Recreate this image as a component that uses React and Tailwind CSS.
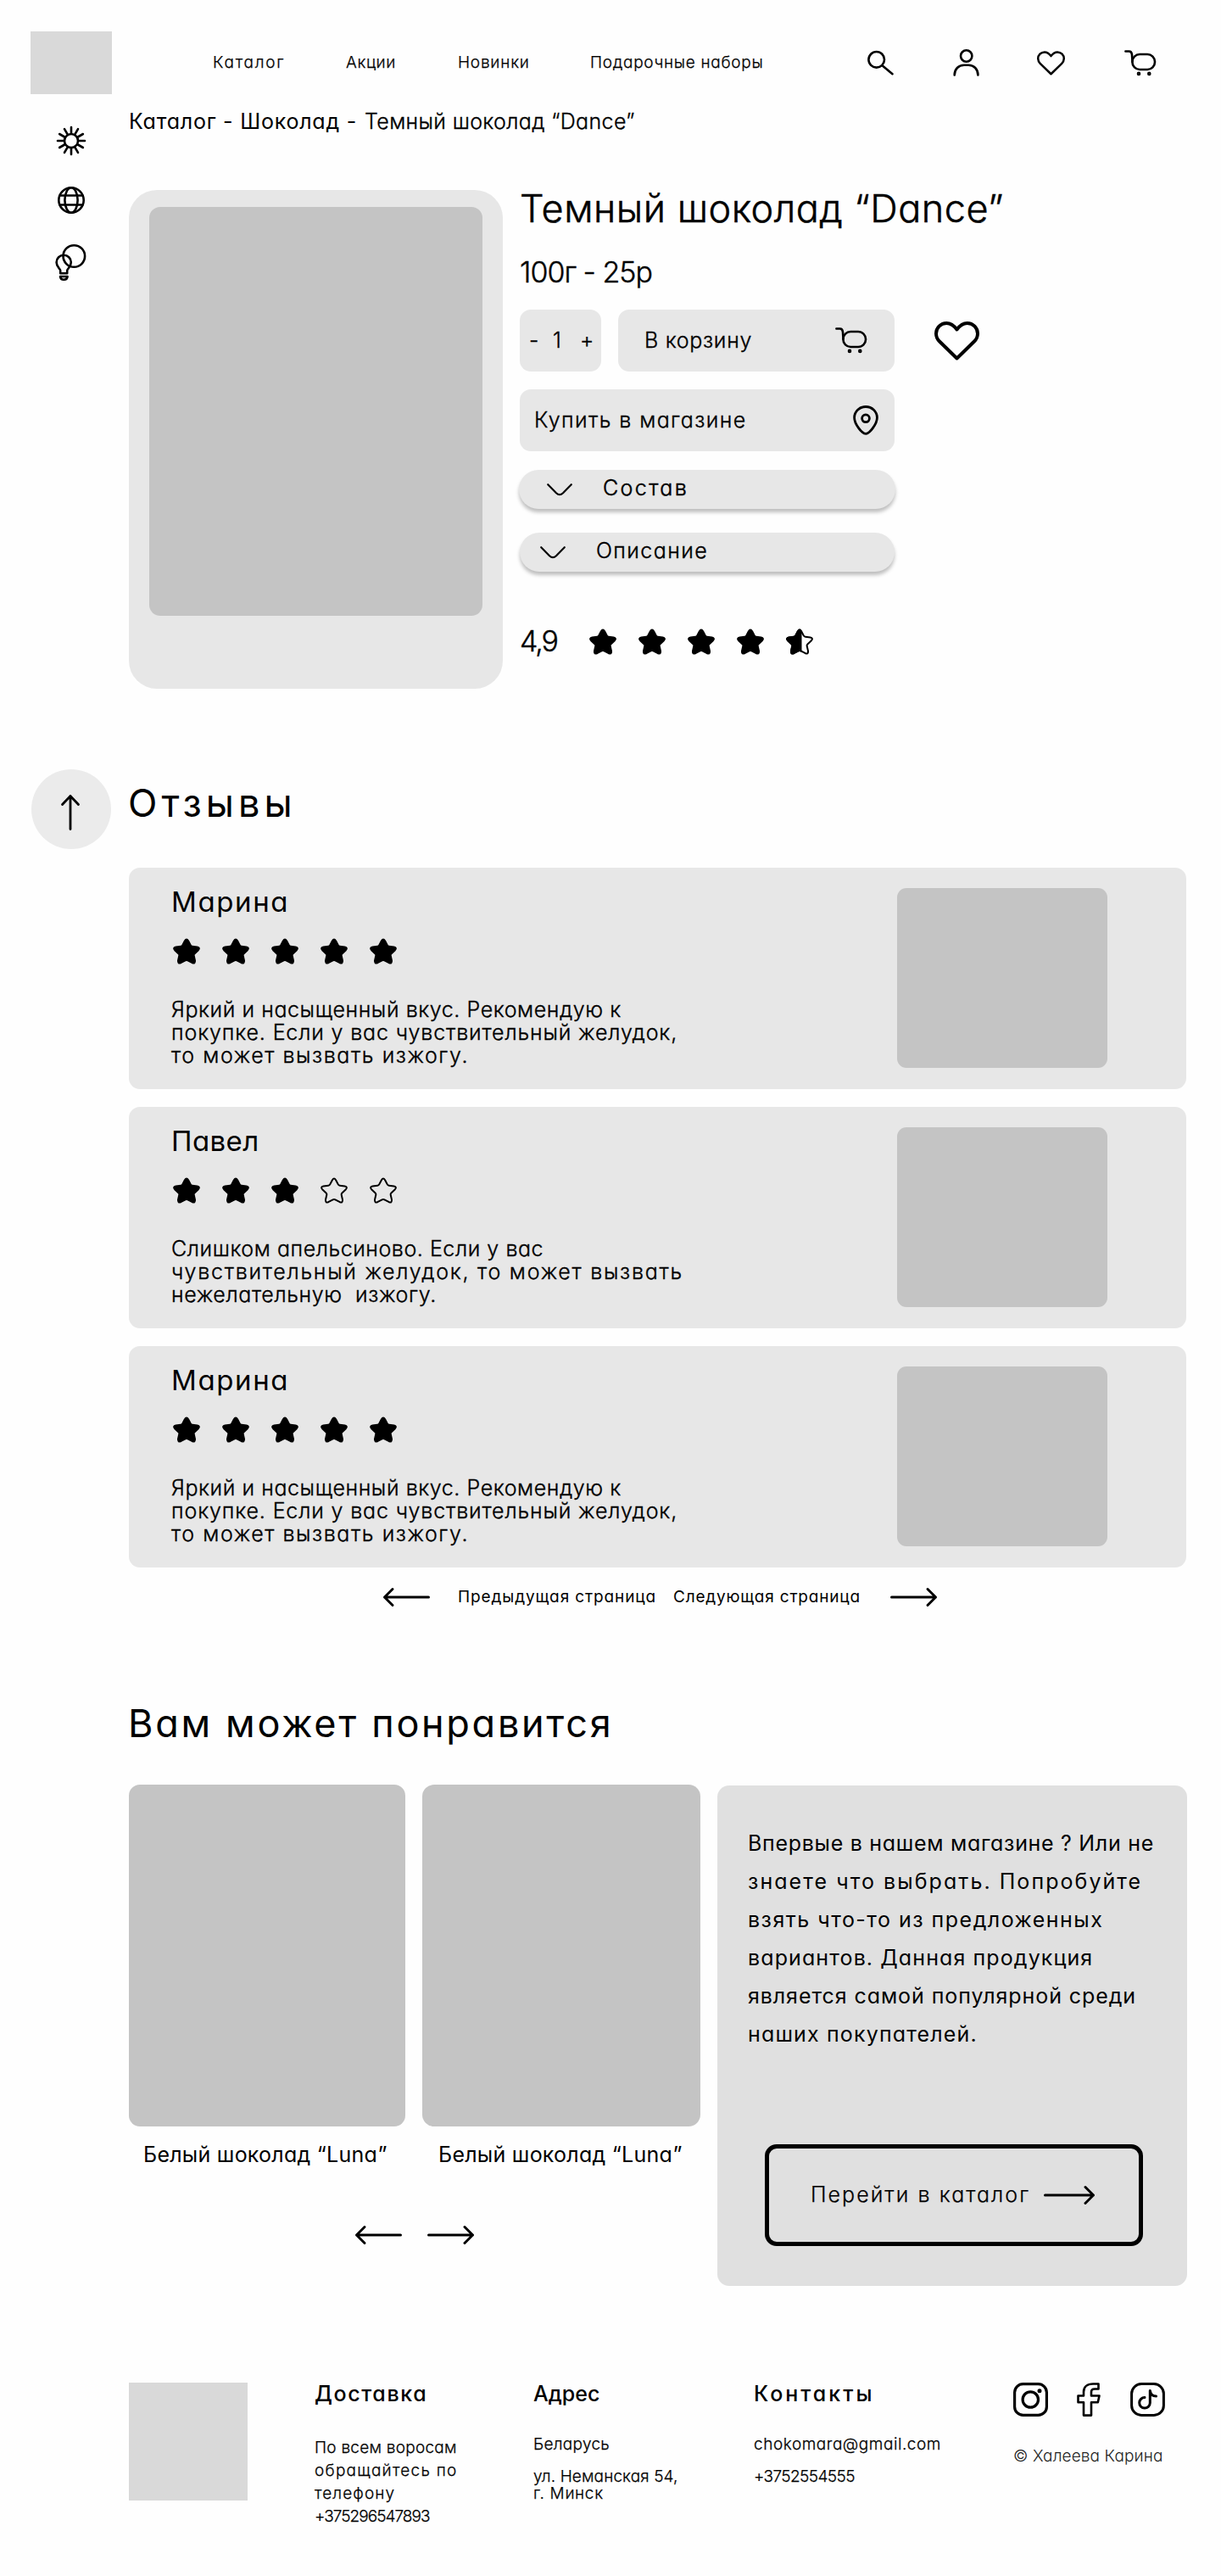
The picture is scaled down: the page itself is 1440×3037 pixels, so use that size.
import React, { useId } from "react";

const STAR =
  "M13.9 3.2Q16 -0.2 18.1 3.2L20.8 8.4Q21.4 9.6 22.8 9.8L28.6 10.6Q32.4 11.4 29.9 14.2L25.4 18.4Q24.4 19.4 24.7 20.7L26 26.4Q26.4 30.6 22.8 29.2L17.4 26.3Q16 25.6 14.6 26.3L9.2 29.2Q5.6 30.6 6 26.4L7.3 20.7Q7.6 19.4 6.6 18.4L2.1 14.2Q-.4 11.4 3.4 10.6L9.2 9.8Q10.6 9.6 11.2 8.4Z";

function Svg({ w, h, sw = 2.6, className = "", children }) {
  return (
    <svg
      width={w}
      height={h}
      viewBox={`0 0 ${w} ${h}`}
      fill="none"
      stroke="#000"
      strokeWidth={sw}
      strokeLinecap="round"
      strokeLinejoin="round"
      className={`shrink-0 overflow-visible ${className}`}
    >
      {children}
    </svg>
  );
}

function Star({ kind = "full" }) {
  const id = useId();
  return (
    <Svg w={32} h={31} sw={2}>
      {kind === "half" && (
        <clipPath id={id}>
          <rect x="-2" y="-2" width="20.5" height="36" />
        </clipPath>
      )}
      <path d={STAR} fill={kind === "full" ? "#000" : "none"} />
      {kind === "half" && <path d={STAR} fill="#000" clipPath={`url(#${id})`} />}
    </Svg>
  );
}

function Stars({ kinds, className = "" }) {
  return (
    <div className={`flex gap-[26px] ${className}`}>
      {kinds.map((k, i) => (
        <Star key={i} kind={k} />
      ))}
    </div>
  );
}

function Heart({ w, h, className }) {
  return (
    <svg width={w} height={h} viewBox="0 0 53 46" fill="none" stroke="#000" strokeWidth="4" strokeLinejoin="round" className={`shrink-0 ${className}`}>
      <path d="M26.5 43.5L6 23.5A13 13 0 0 1 2 14.5A12.3 12.3 0 0 1 14.3 2C19.5 2 23 4.8 26.5 9.5C30 4.8 33.5 2 38.7 2A12.3 12.3 0 0 1 51 14.5A13 13 0 0 1 47 23.5Z" />
    </svg>
  );
}

function Cart({ className }) {
  return (
    <Svg w={38} h={31} className={className}>
      <path d="M1.4 1.5H5.5C8.2 1.5 8.8 3 9 5.5L9.5 13.5" />
      <rect x="9.4" y="5" width="26.6" height="18" rx="8.8" />
      <circle cx="17" cy="27.9" r="1.3" strokeWidth="2" />
      <circle cx="29.3" cy="27.9" r="1.3" strokeWidth="2" />
    </Svg>
  );
}

function Arrow({ left, w = 55, className = "" }) {
  const end = w - 1.5;
  return (
    <Svg w={w} h={22} sw={3} className={className}>
      <g transform={left ? `matrix(-1 0 0 1 ${w} 0)` : undefined}>
        <path d={`M1.5 11H${end}M${end - 9.5} 1.5L${end} 11L${end - 9.5} 20.5`} />
      </g>
    </Svg>
  );
}

function Chevron({ className }) {
  return (
    <Svg w={30} h={15} sw={2.2} className={className}>
      <path d="M1.2 1.2L11 11.2Q15 15 19 11.2L28.8 1.2" />
    </Svg>
  );
}

const F5 = ["full", "full", "full", "full", "full"];

const marina = {
  name: <span className="tracking-[1.6px]">Марина</span>,
  stars: F5,
  lines: (
    <>
      <p className="tracking-[0.57px]">Яркий и насыщенный вкус. Рекомендую к</p>
      <p className="tracking-[0.86px]">покупке. Если у вас чувствительный желудок,</p>
      <p className="tracking-[1.56px]">то может вызвать изжогу.</p>
    </>
  ),
};

const pavel = {
  name: <span className="tracking-[0.4px]">Павел</span>,
  stars: ["full", "full", "full", "empty", "empty"],
  lines: (
    <>
      <p className="tracking-[0.55px]">Слишком апельсиново. Если у вас</p>
      <p className="tracking-[1.73px]">чувствительный желудок, то может вызвать</p>
      <p className="tracking-[0.63px]">{"нежелательную\u00a0 изжогу."}</p>
    </>
  ),
};

function Review({ name, stars, lines }) {
  return (
    <article className="flex h-[261px] w-[1247px] rounded-[13px] bg-[#e7e7e7] pl-[50px]">
      <div className="w-[856px] whitespace-nowrap pt-[20px]">
        <h3 className="text-[33px] leading-[40px]">{name}</h3>
        <Stars kinds={stars} className="mt-[23px] pl-[2px]" />
        <div className="mt-[40px] text-[25px] font-light leading-[27px] [-webkit-text-stroke:0.35px]">{lines}</div>
      </div>
      <div className="mt-[24px] h-[212px] w-[248px] rounded-[11px] bg-[#c4c4c4]" />
    </article>
  );
}

export default function App() {
  return (
    <div className="h-[3037px] w-[1440px] overflow-hidden bg-[#fefefe] pt-[37px] font-['Inter',sans-serif] text-black [font-feature-settings:'cv11']">
      <header className="flex h-[74px] items-center whitespace-nowrap pl-[36px]">
        <div className="h-[74px] w-[96px] bg-[#d9d9d9]" />
        <nav className="ml-[119px] flex w-[771px] text-[19px] font-light leading-[30px] [-webkit-text-stroke:0.25px]">
          <a className="w-[157px] tracking-[1.75px]">Каталог</a>
          <a className="w-[132px] tracking-[0.62px]">Акции</a>
          <a className="w-[156px] tracking-[0.8px]">Новинки</a>
          <a className="tracking-[0.7px]">Подарочные наборы</a>
        </nav>
        <Svg w={32} h={30}>
          <circle cx="11.7" cy="11.3" r="9.3" />
          <path d="M18.5 18.2L30.5 28.2" />
        </Svg>
        <Svg w={32} h={32} className="ml-[70px]">
          <circle cx="15.7" cy="8" r="6.7" />
          <path d="M1.7 30.5C1.7 23.5 6.5 18.8 13 18.8h5.2C24.6 18.8 29.4 23.5 29.4 30.5" />
        </Svg>
        <Heart w={33} h={29} className="ml-[67px]" />
        <Cart className="ml-[70px]" />
      </header>

      <div className="flex">
        <aside className="flex w-[152px] shrink-0 flex-col pt-[37px]">
          <Svg w={36} h={36} className="ml-[66px]">
            <circle cx="18" cy="18" r="8" />
            {Array.from({ length: 12 }, (_, i) => (
              <path key={i} d="M18 9V2" transform={`rotate(${i * 30} 18 18)`} />
            ))}
          </Svg>
          <Svg w={32} h={32} className="ml-[68px] mt-[36px]">
            <circle cx="16" cy="16" r="14.7" />
            <ellipse cx="16" cy="16" rx="7.6" ry="14.7" />
            <path d="M2.6 10.5H29.4M2.6 21.5H29.4" />
          </Svg>
          <Svg w={37} h={43} className="ml-[65px] mt-[36px]">
            <circle cx="22.3" cy="14" r="12.8" />
            <path d="M6.2 34.3V31C6.2 28.5 1.6 27.5 1.6 21.3A8.6 8.6 0 0 1 18.8 21.3C18.8 27.5 14.2 28.5 14.2 31V34.3Z" />
            <path d="M6 38H14.6C14.3 40.5 12.8 41.7 10.3 41.7S6.3 40.5 6 38Z" />
          </Svg>
          <button className="ml-[37px] mt-[576px] flex size-[94px] items-center justify-center rounded-full bg-[#ebebeb]">
            <Svg w={22} h={42} sw={2.8} className="-ml-[2px] mt-[8px]">
              <path d="M11 40.5V1.5M1.5 11.5L11 1.5L20.5 11.5" />
            </Svg>
          </button>
        </aside>

        <main className="w-[1248px] whitespace-nowrap pt-[14px]">
          <div className="flex text-[25px] leading-[36px]">
            <span className="w-[278px] tracking-[0.77px]">Каталог - Шоколад -</span>
            <span className="font-light tracking-[0.35px] [-webkit-text-stroke:0.35px]">Темный шоколад “Dance”</span>
          </div>

          <section className="mt-[63px] flex h-[588px]">
            <div className="h-[588px] w-[441px] rounded-[33px] bg-[#e7e7e7] px-[24px] pt-[20px]">
              <div className="h-[482px] w-[393px] rounded-[13px] bg-[#c4c4c4]" />
            </div>
            <div className="-mt-[3px] ml-[20px]">
              <h1 className="text-[45px] font-light leading-[50px] tracking-[0.5px] [-webkit-text-stroke:0.5px]">Темный шоколад “Dance”</h1>
              <p className="mt-[30px] text-[34px] font-light leading-[40px] tracking-[-1px] [-webkit-text-stroke:0.4px]">100г - 25р</p>
              <div className="mt-[24px] flex items-center text-[25px] font-light [-webkit-text-stroke:0.35px]">
                <div className="flex h-[73px] w-[96px] items-center rounded-[13px] bg-[#e7e7e7] pl-[11px]">
                  <span className="w-[28px]">-</span>
                  <span className="w-[32px]">1</span>
                  <span>+</span>
                </div>
                <button className="ml-[20px] flex h-[73px] w-[326px] items-center rounded-[13px] bg-[#e7e7e7] pl-[31px]">
                  <span className="w-[225px] text-left tracking-[0.7px]">В корзину</span>
                  <Cart />
                </button>
                <Heart w={53} h={46} className="ml-[47px]" />
              </div>
              <button className="mt-[21px] flex h-[73px] w-[442px] items-center rounded-[13px] bg-[#e7e7e7] pl-[17px] text-[25px] font-light [-webkit-text-stroke:0.35px]">
                <span className="w-[376px] text-left tracking-[1.4px]">Купить в магазине</span>
                <Svg w={30} h={35} sw={2.8}>
                  <path d="M15 33.4C10.5 33.4 1.6 21.5 1.6 14.4A13.4 12.9 0 0 1 28.4 14.4C28.4 21.5 19.5 33.4 15 33.4Z" />
                  <circle cx="15" cy="15.3" r="4.4" />
                </Svg>
              </button>
              <button className="-ml-px mt-[22px] flex h-[46px] w-[444px] items-center rounded-full bg-[#e7e7e7] pl-[33px] text-[25px] shadow-[0_4px_4px_rgba(0,0,0,0.25)]">
                <Chevron />
                <span className="ml-[36px] pb-[2px] font-light tracking-[2.4px] [-webkit-text-stroke:0.5px]">Состав</span>
              </button>
              <button className="mt-[28px] flex h-[46px] w-[442px] items-center rounded-full bg-[#e7e7e7] pl-[24px] text-[25px] shadow-[0_4px_4px_rgba(0,0,0,0.25)]">
                <Chevron />
                <span className="ml-[36px] pb-[2px] font-light tracking-[1.4px] [-webkit-text-stroke:0.4px]">Описание</span>
              </button>
              <div className="mt-[62px] flex items-center">
                <span className="w-[82px] text-[34px] font-light leading-[40px] tracking-[-2px] [-webkit-text-stroke:0.4px]">4,9</span>
                <Stars kinds={["full", "full", "full", "full", "half"]} />
              </div>
            </div>
          </section>

          <h2 className="-ml-px mt-[105px] text-[45px] leading-[60px] tracking-[5px]">Отзывы</h2>
          <section className="mt-[46px] flex flex-col gap-[21px]">
            <Review {...marina} />
            <Review {...pavel} />
            <Review {...marina} />
          </section>

          <div className="mt-[20px] flex h-[30px] items-center pl-[300px] text-[19px]">
            <Arrow left />
            <span className="ml-[33px] w-[254px] tracking-[0.88px]">Предыдущая страница</span>
            <span className="w-[256px] tracking-[0.8px]">Следующая страница</span>
            <Arrow />
          </div>

          <h2 className="-ml-px mt-[104px] text-[45px] leading-[60px] tracking-[2.7px]">Вам может понравится</h2>

          <section className="mt-[42px] flex h-[591px]">
            <div className="w-[694px]">
              <div className="flex gap-[20px]">
                <div className="h-[403px] w-[326px] rounded-[13px] bg-[#c4c4c4]" />
                <div className="h-[403px] w-[328px] rounded-[14px] bg-[#c4c4c4]" />
              </div>
              <div className="mt-[18px] flex pl-[17px] text-[25px] leading-[30px] tracking-[0.25px]">
                <span className="w-[348px]">Белый шоколад “Luna”</span>
                <span>Белый шоколад “Luna”</span>
              </div>
              <div className="mt-[69px] flex gap-[30px] pl-[267px]">
                <Arrow left />
                <Arrow />
              </div>
            </div>
            <div className="mt-px h-[590px] w-[554px] rounded-[14px] bg-[#e0e0e0] pl-[36px] pt-[46px]">
              <div className="text-[25px] leading-[45px]">
                <p className="tracking-[0.7px]">Впервые в нашем магазине ? Или не</p>
                <p className="tracking-[2.05px]">знаете что выбрать. Попробуйте</p>
                <p className="tracking-[1.48px]">взять что-то из предложенных</p>
                <p className="tracking-[1.1px]">вариантов. Данная продукция</p>
                <p className="tracking-[0.92px]">является самой популярной среди</p>
                <p className="tracking-[1.15px]">наших покупателей.</p>
              </div>
              <button className="ml-[20px] mt-[107px] flex h-[120px] w-[446px] items-center rounded-[14px] border-[5px] border-black pl-[49px] text-[25px] font-light tracking-[2.05px] [-webkit-text-stroke:0.25px]">
                <span className="w-[275px] text-left">Перейти в каталог</span>
                <Arrow w={60} />
              </button>
            </div>
          </section>

          <footer className="mt-[114px] flex text-[19px] font-light leading-[27px] [-webkit-text-stroke:0.25px]">
            <div className="h-[139px] w-[140px] bg-[#d9d9d9]" />
            <div className="-mt-[2px] ml-[79px] w-[258px]">
              <h4 className="mb-[35px] text-[25px] font-medium leading-[30px] tracking-[1.6px] [-webkit-text-stroke:0]">Доставка</h4>
              <p className="tracking-[0.25px]">По всем воросам</p>
              <p className="tracking-[1.25px]">обращайтесь по</p>
              <p className="tracking-[1.1px]">телефону</p>
              <p className="tracking-[-0.97px]">+375296547893</p>
            </div>
            <div className="-mt-[2px] w-[260px]">
              <h4 className="mb-[31px] text-[25px] font-medium leading-[30px] [-webkit-text-stroke:0]">Адрес</h4>
              <p className="tracking-[0.3px]">Беларусь</p>
              <p className="mt-[15px] leading-[20px] tracking-[0.12px]">ул. Неманская 54,</p>
              <p className="leading-[20px] tracking-[0.65px]">г. Минск</p>
            </div>
            <div className="-mt-[2px] w-[306px]">
              <h4 className="mb-[31px] text-[25px] font-medium leading-[30px] tracking-[3px] [-webkit-text-stroke:0]">Контакты</h4>
              <p className="tracking-[0.55px]">chokomara@gmail.com</p>
              <p className="mt-[11px] tracking-[-0.6px]">+3752554555</p>
            </div>
            <div>
              <div className="flex">
                <Svg w={41} h={40} sw={3.2}>
                  <rect x="1.6" y="1.6" width="37.8" height="36.8" rx="10" />
                  <circle cx="20.3" cy="20" r="9.2" />
                  <circle cx="31" cy="9.8" r="1.2" strokeWidth="2.6" />
                </Svg>
                <Svg w={28} h={40} sw={2.6} className="ml-[34px]">
                  <path d="M25.5 1.5V7.5H21C18.5 7.5 17 8.8 17 11V15.5H26.5L24.8 23.2H17V38.6H8V23.2H1.5V15.5H8V11C8 5 12.5 1.5 19 1.5Z" />
                </Svg>
                <Svg w={41} h={40} sw={3} className="ml-[35px]">
                  <rect x="1.6" y="1.6" width="37.8" height="36.8" rx="11.5" />
                  <path d="M23.3 9.5V24A6.3 6.3 0 1 1 17 17.5M23.3 9.5C24 13.8 27 16 30.5 16" />
                </Svg>
              </div>
              <p className="mt-[33px] tracking-[0.12px] text-[#222] [-webkit-text-stroke:0]">© Халеева Карина</p>
            </div>
          </footer>
        </main>
      </div>
    </div>
  );
}
